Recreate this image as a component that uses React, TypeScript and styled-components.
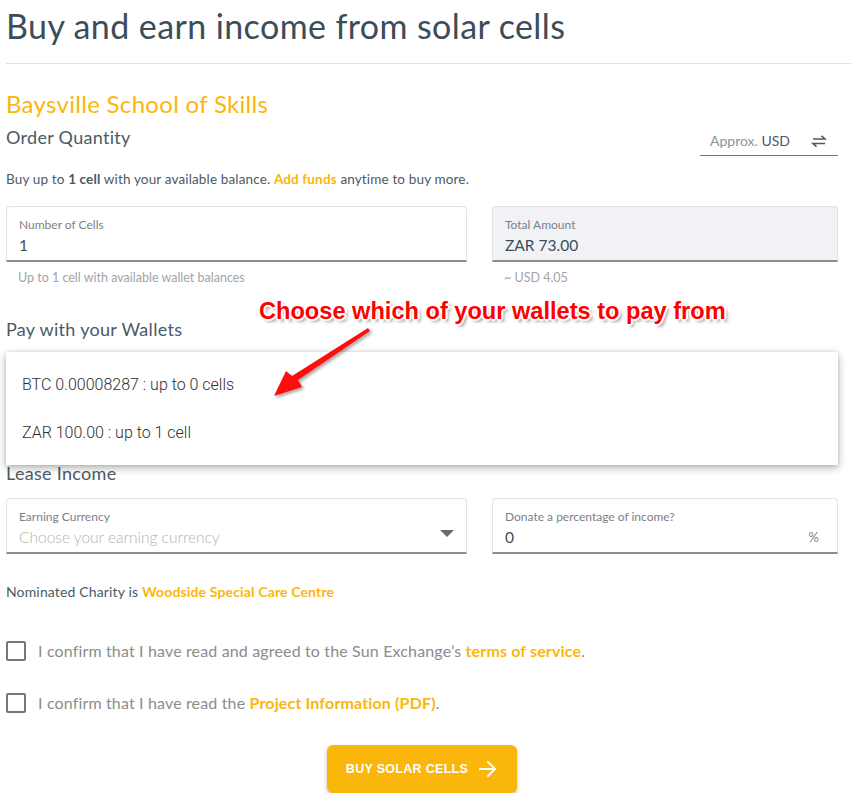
import React from 'react';
import styled, { createGlobalStyle } from 'styled-components';

const GlobalStyle = createGlobalStyle`
  body {
    margin: 0;
    background: #ffffff;
    font-family: Lato, "Noto Sans", sans-serif;
    color: #3c4d5a;
  }
`;

const ORANGE = '#fbb60c';

// Annotation arrow (drawn)
const RedArrow = () => (
  <ArrowSvg width="110" height="80" viewBox="0 0 110 80">
    <defs>
      <filter id="sh" x="-20%" y="-20%" width="150%" height="150%">
        <feDropShadow dx="2" dy="2" stdDeviation="1.5" floodColor="#000" floodOpacity="0.35" />
      </filter>
    </defs>
    <polygon
      filter="url(#sh)"
      fill="#ff1010"
      points="104,2 106,5 34,54 38,61 10,70 22,45 28,50"
    />
  </ArrowSvg>
);

const SwapIcon = () => (
  <svg width="18" height="14" viewBox="0 0 18 14" fill="none" stroke="#4a5a66" strokeWidth="1.6">
    <path d="M3 5h12L11.5 1.8" />
    <path d="M15 9.5H3l3.5 3.2" />
  </svg>
);

const ArrowRight = () => (
  <svg width="20" height="18" viewBox="0 0 20 18" fill="none" stroke="#fff" strokeWidth="2" strokeLinecap="round" strokeLinejoin="round">
    <path d="M2 9h15M10 2l7 7-7 7" />
  </svg>
);

const Field = ({ label, value, filled, placeholder, suffix, caret }: {
  label: string; value?: string; filled?: boolean; placeholder?: string; suffix?: string; caret?: boolean;
}) => (
  <FieldBox filled={filled}>
    <FieldLabel>{label}</FieldLabel>
    <FieldRow>
      <FieldValue muted={!value}>{value || placeholder}</FieldValue>
      {suffix && <Suffix>{suffix}</Suffix>}
      {caret && <Caret />}
    </FieldRow>
  </FieldBox>
);

const App: React.FC = () => {
  return (
    <Page>
      <GlobalStyle />
      <Title>Buy and earn income from solar cells</Title>
      <Divider />

      <Content>
        <Project>Baysville School of Skills</Project>

        <HeaderRow>
          <SectionTitle>Order Quantity</SectionTitle>
          <CurrencySwitch>
            <span><Muted>Approx.</Muted> USD</span>
            <SwapIcon />
          </CurrencySwitch>
        </HeaderRow>

        <Note>
          Buy up to <b>1 cell</b> with your available balance. <Link>Add funds</Link> anytime to buy more.
        </Note>

        <Grid>
          <div>
            <Field label="Number of Cells" value="1" />
            <Helper>Up to 1 cell with available wallet balances</Helper>
          </div>
          <div>
            <Field label="Total Amount" value="ZAR 73.00" filled />
            <Helper>~ USD 4.05</Helper>
          </div>
        </Grid>

        <WalletSection>
          <SectionTitle>Pay with your Wallets</SectionTitle>
          <Callout>
            <CalloutText>Choose which of your wallets to pay from</CalloutText>
          </Callout>
          <RedArrow />
          <Menu>
            <MenuItem>BTC 0.00008287 : up to 0 cells</MenuItem>
            <MenuItem>ZAR 100.00 : up to 1 cell</MenuItem>
          </Menu>
          <WalletSpacer />
          <SectionTitle>Lease Income</SectionTitle>
        </WalletSection>

        <Grid tight>
          <Field label="Earning Currency" placeholder="Choose your earning currency" caret />
          <Field label="Donate a percentage of income?" value="0" suffix="%" />
        </Grid>

        <Charity>
          Nominated Charity is <Link>Woodside Special Care Centre</Link>
        </Charity>

        <Checks>
          <CheckRow>
            <CheckBox />
            <CheckText>I confirm that I have read and agreed to the Sun Exchange’s <Link>terms of service</Link>.</CheckText>
          </CheckRow>
          <CheckRow>
            <CheckBox />
            <CheckText>I confirm that I have read the <Link>Project Information (PDF)</Link>.</CheckText>
          </CheckRow>
        </Checks>

        <ButtonRow>
          <BuyButton>
            BUY SOLAR CELLS
            <ArrowRight />
          </BuyButton>
        </ButtonRow>
      </Content>
    </Page>
  );
};

export default App;

// Estilos
const Page = styled.div`
  width: 851px;
  padding-top: 4px;
`;

const Title = styled.h1`
  margin: 0 0 0 6px;
  font-size: 34px;
  font-weight: 400;
  letter-spacing: 0.4px;
  color: #3c4d5a;
  line-height: 44px;
`;

const Divider = styled.hr`
  margin: 15px 0 0 6px;
  border: none;
  border-top: 1px solid #e2e2e2;
`;

const Content = styled.div`
  padding: 0 13px 0 6px;
`;

const Project = styled.h2`
  margin: 26px 0 0;
  font-size: 24px;
  line-height: 28px;
  font-weight: 400;
  letter-spacing: 0.3px;
  color: ${ORANGE};
`;

const HeaderRow = styled.div`
  display: flex;
  justify-content: space-between;
  align-items: flex-start;
  margin-top: 7px;
`;

const SectionTitle = styled.h3`
  margin: 0;
  font-size: 18px;
  line-height: 24px;
  font-weight: 400;
  letter-spacing: 0.3px;
  color: #4a5a66;
`;

const CurrencySwitch = styled.div`
  margin-top: 1px;
  width: 138px;
  height: 30px;
  box-sizing: border-box;
  padding: 0 10px;
  display: flex;
  align-items: center;
  justify-content: space-between;
  border-bottom: 1px solid #6b7780;
  font-size: 14px;
  color: #4a5a66;
`;

const Muted = styled.span`
  color: #8a959d;
`;

const Note = styled.p`
  margin: 14px 0 0;
  font-size: 13.5px;
  letter-spacing: 0.15px;
  line-height: 18px;
  color: #4a5a66;
  b { font-weight: 700; }
`;

const Link = styled.span`
  color: ${ORANGE};
  font-weight: 700;
`;

const Grid = styled.div<{ tight?: boolean }>`
  display: grid;
  grid-template-columns: 461px 346px;
  column-gap: 25px;
  margin-top: ${p => (p.tight ? '13px' : '18px')};
`;

const FieldBox = styled.div<{ filled?: boolean }>`
  height: 56px;
  box-sizing: border-box;
  padding: 10px 12px 0;
  border: 1px solid #e1e2ea;
  border-bottom: 2px solid #8e8e8e;
  border-radius: 4px 4px 0 0;
  background: ${p => (p.filled ? '#f1f2f6' : '#fff')};
`;

const FieldLabel = styled.div`
  font-size: 12px;
  line-height: 15px;
  color: #7c8186;
`;

const FieldRow = styled.div`
  display: flex;
  align-items: center;
  margin-top: 2px;
`;

const FieldValue = styled.div<{ muted?: boolean }>`
  flex: 1;
  font-size: 15.5px;
  line-height: 22px;
  font-weight: ${p => (p.muted ? 300 : 400)};
  color: ${p => (p.muted ? '#b0b3b6' : '#3c4d5a')};
`;

const Suffix = styled.span`
  font-size: 13px;
  color: #7c8186;
  margin-right: 6px;
`;

const Caret = styled.span`
  width: 0;
  height: 0;
  border-left: 7px solid transparent;
  border-right: 7px solid transparent;
  border-top: 7px solid #6a6a6a;
  margin: 0 0 8px 0;
`;

const Helper = styled.div`
  margin: 9px 0 0 12px;
  font-size: 12.5px;
  line-height: 14px;
  color: #a0a4a8;
`;

const WalletSection = styled.div`
  position: relative;
  margin-top: 32px;
`;

const WalletSpacer = styled.div`
  height: 120px;
`;

const Callout = styled.div`
  position: absolute;
  left: 253px;
  top: -19px;
  z-index: 3;
`;

const CalloutText = styled.span`
  font-family: "Liberation Sans", Arial, sans-serif;
  font-weight: 700;
  font-size: 23.6px;
  color: #ff0000;
  white-space: nowrap;
  text-shadow:
    -1px -1px 0 #fff, 1px -1px 0 #fff, -1px 1px 0 #fff, 1px 1px 0 #fff,
    0 -2px 0 #fff, 0 2px 0 #fff, -2px 0 0 #fff, 2px 0 0 #fff,
    3px 3px 3px rgba(0, 0, 0, 0.35);
`;

const ArrowSvg = styled.svg`
  position: absolute;
  left: 258px;
  top: 9px;
  z-index: 3;
`;

const Menu = styled.div`
  position: absolute;
  left: 0;
  right: 0;
  top: 35px;
  height: 113px;
  background: #fff;
  box-shadow: 0 3px 8px rgba(0, 0, 0, 0.3), 0 0 3px rgba(0, 0, 0, 0.12);
  display: flex;
  flex-direction: column;
  padding-top: 8px;
  box-sizing: border-box;
  z-index: 2;
`;

const MenuItem = styled.div`
  height: 48px;
  display: flex;
  align-items: center;
  padding-left: 16px;
  font-family: Roboto, sans-serif;
  font-size: 16px;
  font-weight: 300;
  color: #2f2f2f;
`;

const Charity = styled.p`
  margin: 29px 0 0;
  font-size: 14px;
  letter-spacing: 0.15px;
  line-height: 18px;
  color: #4a5a66;
`;

const Checks = styled.div`
  margin-top: 40px;
  display: flex;
  flex-direction: column;
  gap: 32px;
`;

const CheckRow = styled.div`
  display: flex;
  align-items: center;
  gap: 12px;
`;

const CheckBox = styled.span`
  width: 16px;
  height: 16px;
  border: 2px solid #777;
  border-radius: 2px;
`;

const CheckText = styled.span`
  font-size: 16px;
  letter-spacing: 0.15px;
  line-height: 20px;
  color: #8c8c8c;
`;

const ButtonRow = styled.div`
  display: flex;
  justify-content: center;
  margin-top: 32px;
`;

const BuyButton = styled.button`
  width: 190px;
  height: 48px;
  border: none;
  border-radius: 6px;
  background: ${ORANGE};
  color: #fff;
  font-family: "Liberation Sans", Arial, sans-serif;
  font-weight: 700;
  font-size: 12.5px;
  letter-spacing: 0.3px;
  display: flex;
  align-items: center;
  justify-content: center;
  gap: 10px;
  box-shadow: 0 2px 4px rgba(0, 0, 0, 0.25);
`;
